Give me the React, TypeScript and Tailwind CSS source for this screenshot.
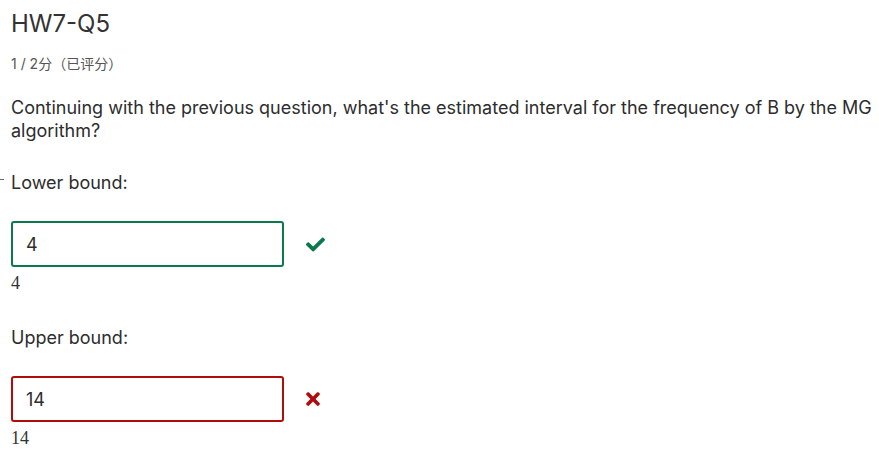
import React from "react";
import { FaCheck, FaTimes } from "react-icons/fa";

export default function App() {
  return (
    <div className="w-[879px] h-[452px] bg-white overflow-hidden relative text-[#2d2d2d]" style={{ fontFamily: "Inter, 'Noto Sans CJK SC', sans-serif" }}>
      <div className="absolute left-0 top-[179px] w-[4px] h-px bg-[#666]" />
      <div className="pl-[11px] pt-[10px]">
        <h1 className="text-[24px] leading-[28px] text-[#333] font-normal">HW7-Q5</h1>
        <div className="mt-[16px] text-[14px] leading-[20px] text-[#555]">1 / 2分（已评分）</div>
        <p className="mt-[22px] text-[18px] leading-[23px] text-[#2d2d2d] pr-[2px]">
          Continuing with the previous question, what's the estimated interval for the frequency of B by the MG algorithm?
        </p>
        <div className="mt-[30px] text-[18px] leading-[22px]">Lower bound:</div>
        <div className="mt-[27px] flex items-center">
          <div className="w-[273px] h-[46px] border-2 border-[#0b7a4b] rounded-[3px] flex items-center pl-[13px] text-[18px]">4</div>
          <FaCheck className="ml-[22px] text-[#0b7a4b] w-[19px] h-[19px]" />
        </div>
        <div className="mt-[5px] text-[18px] leading-[22px] text-[#333]" style={{ fontFamily: "'Liberation Serif', serif" }}>4</div>
        <div className="mt-[33px] text-[18px] leading-[22px]">Upper bound:</div>
        <div className="mt-[27px] flex items-center">
          <div className="w-[273px] h-[46px] border-2 border-[#b00c0c] rounded-[3px] flex items-center pl-[13px] text-[18px]">14</div>
          <FaTimes className="ml-[22px] text-[#b00c0c] w-[14px] h-[20px]" />
        </div>
        <div className="mt-[5px] text-[18px] leading-[22px] text-[#333]" style={{ fontFamily: "'Liberation Serif', serif" }}>14</div>
      </div>
    </div>
  );
}
